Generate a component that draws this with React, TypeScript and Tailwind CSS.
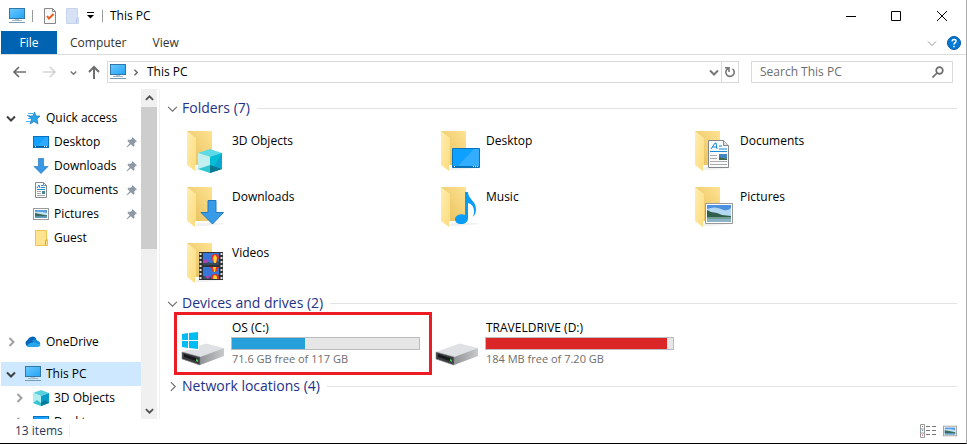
import type { ReactNode } from 'react';

type IconProps = { className?: string };

function Chevron({ direction, className = '' }: { direction: 'down' | 'right' | 'up'; className?: string }) {
  const d = { down: 'M1 3.5 5 7.5 9 3.5', right: 'M3.5 1 7.5 5 3.5 9', up: 'M1 6.5 5 2.5 9 6.5' }[direction];
  return (
    <svg viewBox="0 0 10 10" className={`shrink-0 ${className}`} fill="none" stroke="currentColor" aria-hidden="true">
      <path d={d} />
    </svg>
  );
}

function PcIcon({ className = 'size-4' }: IconProps) {
  return (
    <svg viewBox="0 0 16 16" className={`shrink-0 ${className}`} aria-hidden="true">
      <defs>
        <linearGradient id="screen" x1="0" y1="0" x2="1" y2="1">
          <stop offset="0" stopColor="#6cc9ff" />
          <stop offset="1" stopColor="#22a3f5" />
        </linearGradient>
      </defs>
      <rect x=".5" y=".5" width="15" height="10" fill="url(#screen)" stroke="#3278a6" />
      <path d="M6 11h4v1H6z" fill="#b5c4ce" />
      <path d="M3 12.5h10" stroke="#9fb8c8" />
      <path d="M0 14.5h16" stroke="#789caf" />
    </svg>
  );
}

function DesktopIcon() {
  return (
    <svg viewBox="0 0 16 16" className="size-4 shrink-0" aria-hidden="true">
      <rect x=".5" y="2.5" width="15" height="11" fill="#13a0ff" stroke="#0873bd" />
      <path d="M4 12 13 3h2v9z" fill="#2caaff" />
      <path d="M1 12.5h14" stroke="#075f9f" />
      <path d="M2 12.5h1m8 0h1m1 0h1" stroke="#fff" />
    </svg>
  );
}

function ArrowIcon() {
  return (
    <svg viewBox="0 0 16 16" className="size-4 shrink-0" aria-hidden="true">
      <path d="M5.5.5h5v8h4.500L8 15.500 1 8.500h4.500z" fill="#3a97e4" stroke="#2778bd" strokeWidth=".7" />
    </svg>
  );
}

function DocumentIcon() {
  return (
    <svg viewBox="0 0 16 16" className="size-4 shrink-0" aria-hidden="true">
      <path d="M2.5.5h8l3 3v12h-11z" fill="#fafafa" stroke="#858a8e" />
      <path d="M10.5.5v3h3" fill="none" stroke="#858a8e" />
      <path d="m4 6 2-3 1 3M8 3.500h2M8 5.500h4M4 7.500h8" fill="none" stroke="#248bd0" />
      <path d="M4 9.500h4m-4 2h4m-4 2h8" stroke="#a6aaad" />
      <path d="M9 9h3v3H9z" fill="#4c8298" />
    </svg>
  );
}

function PictureIcon({ className = 'size-4' }: IconProps) {
  return (
    <svg viewBox="0 0 16 16" className={`shrink-0 ${className}`} aria-hidden="true">
      <rect x=".5" y="2.5" width="15" height="11" fill="#fff" stroke="#9a9a9a" />
      <path d="M2 4h12v8H2z" fill="#5a9de2" />
      <path d="M2 6q4-1 12 1v2H2z" fill="#c2e1ef" />
      <path d="m2 7 5 1 7 1.500v1H2z" fill="#3b6c60" />
      <path d="M2 10.500h12V12H2z" fill="#659cb9" />
    </svg>
  );
}

function GuestFolderIcon() {
  return (
    <svg viewBox="0 0 16 16" className="size-4 shrink-0" aria-hidden="true">
      <path d="M2.5.5h11v9h1v6h-12z" fill="#ffe391" stroke="#edc451" />
      <path d="M12.5 15.500v-5h1v-1" fill="none" stroke="#dda919" />
    </svg>
  );
}

function QuickAccessIcon() {
  return (
    <svg viewBox="0 0 16 16" className="size-4 shrink-0" aria-hidden="true">
      <path d="m9.500 2 1.500 4h4l-3 3 1 5-4-2.500L5 14l1.500-5-3-3H8z" fill="#2ba3e8" stroke="#1479bd" strokeWidth=".7" />
      <path d="M3 3.500h5M2 5.500h3M3 8.500h3M1 11.500h4" stroke="#47b5f1" />
    </svg>
  );
}

function OneDriveIcon() {
  return (
    <svg viewBox="0 0 16 16" className="size-4 shrink-0" aria-hidden="true">
      <path d="M3 12.500A3.500 3.500 0 0 1 2.500 6 5 5 0 0 1 11.500 5L8 9z" fill="#0865b7" />
      <path d="M7 6.500A5 5 0 0 1 13 7a3 3 0 0 1 2 4L9 9z" fill="#1490df" />
      <path d="M2 12q2-4 7-3.500L15.500 11q-1 2-3 2h-9Q2 13 2 12z" fill="#28a8ea" />
    </svg>
  );
}

function CubeIcon() {
  return (
    <svg viewBox="0 0 16 16" className="size-4 shrink-0" aria-hidden="true">
      <path d="m0 3 8-3 8 3-8 3z" fill="#55d0dc" />
      <path d="m0 3 8 3v10l-8-3z" fill="#b2edf0" />
      <path d="m16 3-8 3v10l8-3z" fill="#079cc6" />
      <path d="m0 13 4-3 4 3v3z" fill="#35c4d1" />
      <path d="m16 13-4-3-4 3v3z" fill="#087999" />
    </svg>
  );
}

function PinIcon() {
  return (
    <svg viewBox="0 0 12 12" className="size-[11px] shrink-0" fill="#8d9aa5" aria-hidden="true">
      <path d="m7 0 5 5-1.500.5L9 7l.2 2.500-1.200 1L5.300 8 1 11.500l-.5-.5L4 6.700 1.500 4l1-1L5 3l1.500-1.500z" />
    </svg>
  );
}

function DriveIcon({ windows = false }: { windows?: boolean }) {
  return (
    <svg viewBox="0 0 48 48" className="mt-[7px] size-12 shrink-0" aria-hidden="true">
      <defs>
        <linearGradient id="driveSide" x1="0" y1="0" x2="1" y2="0">
          <stop offset="0" stopColor="#909295" />
          <stop offset="1" stopColor="#c8c9cb" />
        </linearGradient>
      </defs>
      <path d="m5 35 15 9 27-11-3-2-23 8z" fill="#efefef" />
      <path d="m4 30 22-8q2-1 4 0l16 4-24 9z" fill="#e0e1e4" />
      <path d="m22 35 24-9v8L22 43z" fill="url(#driveSide)" />
      <path d="m4 30 18 5v8L4 37z" fill="#3a3c3f" stroke="#85878a" strokeWidth=".6" />
      <path d="m6 32 12 4v3L6 35z" fill="#17191b" />
      <path d="m18 37 2 1v2l-2-1z" fill="#39dc45" />
      {windows && (
        <>
          <path d="M3 10h18v18H3z" fill="#fff" />
          <path d="m4 12 6-1v7H4zm7-1 9-1v8h-9zM4 19h6v7l-6-1zm7 0h9v8l-9-1z" fill="#00bcf2" />
        </>
      )}
    </svg>
  );
}

function FolderIcon({ children }: { children: ReactNode }) {
  return (
    <svg viewBox="0 0 48 48" className="size-12 shrink-0" aria-hidden="true">
      <defs>
        <linearGradient id="folderBack" x1="0" y1="1" x2="1" y2="0">
          <stop offset="0" stopColor="#e4bd58" />
          <stop offset="1" stopColor="#ffe392" />
        </linearGradient>
        <linearGradient id="folderFront" x1="0" y1="0" x2="1" y2="1">
          <stop offset="0" stopColor="#ffedb0" />
          <stop offset="1" stopColor="#fcdb7b" />
        </linearGradient>
      </defs>
      <path d="m16 43 4-3h24l3 1-22 2z" fill="#f1f1f1" />
      <path d="M9 4h25v34H9z" fill="url(#folderBack)" />
      <path d="m9 4 9 7v27l-1 .5V44l-8-6z" fill="url(#folderFront)" />
      {children}
    </svg>
  );
}

const folderArt: Record<string, ReactNode> = {
  '3D Objects': (
    <>
      <path d="m20 26 12-4 12 4-12 4z" fill="#5cdae6" />
      <path d="m20 26 12 4v16l-12-4z" fill="#c2f0f0" />
      <path d="m44 26-12 4v16l12-4z" fill="#09a6d4" />
      <path d="M32 30v16l6-10 6-10z" fill="#07bdd5" />
      <path d="m20 42 12-4v8z" fill="#30c8d0" />
      <path d="m44 42-12-4v8z" fill="#087890" />
    </>
  ),
  Desktop: (
    <>
      <path d="M20.500 21.500h27v19h-27z" fill="#0ea0ff" stroke="#0874bb" />
      <path d="m26 39 16-17h5v17z" fill="#33adff" />
      <path d="M21 39.500h26" stroke="#0871b5" />
      <path d="M22 39.500h1m18 0h1m1 0h1m1 0h1" stroke="#fff" />
    </>
  ),
  Documents: (
    <>
      <path d="M22.500 13.500h15l5 5v22h-20z" fill="#f9fafb" stroke="#83878b" />
      <path d="M37.500 13.500v5h5" fill="#dfe1e2" stroke="#83878b" />
      <path d="m25 22 4-6h1l1 6m-5-2h5m2-1h3m-3 3h8m-17 2.500h17" fill="none" stroke="#198ad4" />
      <path d="M24 28.500h7m-7 3h7m-7 3h17m-17 3h17" stroke="#aaa" />
      <path d="M33 27h8v6h-8z" fill="#4189c0" />
      <path d="m33 30 8 2v1h-8z" fill="#416d48" />
    </>
  ),
  Downloads: <path d="M30 17.500h8v12h7.500L34.500 41 23 29.500h7z" fill="#389be8" stroke="#2279be" />,
  Music: (
    <path
      d="M33 9h3c0 7 8 9 8 17 0 3-1 6-3 8 3-9-1-13-5-14v15c0 4-3 6-7 6s-6-2-6-5 5-6 10-4z"
      fill="#0b9df5"
    />
  ),
  Pictures: (
    <>
      <path d="M19.500 20.500h27v20h-27z" fill="#fff" stroke="#999" />
      <path d="M21 22h24v17H21z" fill="#4c90e0" />
      <path d="M21 26q8-3 14 0t10-1v8H21z" fill="#b5d8f2" />
      <path d="m21 27 4 2 6 1 5 2 9 1v2H21z" fill="#315e48" />
      <path d="M21 34h24v2H21z" fill="#6f9f93" />
      <path d="M21 36h24v3H21z" fill="#8db4c6" />
    </>
  ),
  Videos: (
    <>
      <path d="M21 13h24v28H21z" fill="#303235" />
      <path d="M25 14h16v12H25zm0 14h16v12H25z" fill="#3576d8" />
      <path d="M22.500 14v27m21-27v27" stroke="#ddd" strokeWidth="2" strokeDasharray="2 2" />
      <path d="m25 24 5-1 3 1 8-2v4H25zm0 13 6 1 10-2v4H25z" fill="#354d5b" />
      <path d="M33 19a4 4 0 0 1 8 0l-3 5h-2zm-1 9h9l-3 5h-3zm1 11a4 4 0 0 1 8 0v1h-8z" fill="#e62f2a" />
      <path d="M35 19q2-6 4 0l-1 5h-2zm0 9h3l-1 5h-1zm0 10q2-4 4 0v2h-4z" fill="#ffd22d" />
      <path d="m25 22 3-2 3 2-2 2h-3zm2 16 3-2 2 2-2 2z" fill="#a843b5" />
    </>
  ),
};

function NavItem({ icon, label, expand, pinned, nested, selected }: {
  icon: ReactNode; label: string; expand?: 'down' | 'right'; pinned?: boolean; nested?: boolean; selected?: boolean;
}) {
  return (
    <li>
      <a
        href="#"
        aria-current={selected ? 'page' : undefined}
        className={`flex h-6 items-center gap-[5px] pr-1 ${nested ? 'pl-[13px]' : 'pl-[5px]'} ${selected ? 'bg-[#cde8ff]' : ''}`}
      >
        <span className={`flex w-[14px] shrink-0 ${expand === 'right' ? 'text-[#a0a0a0]' : 'text-[#404040]'}`}>
          {expand && <Chevron direction={expand} className="size-[10px] stroke-2" />}
        </span>
        {icon}
        <span className="flex-1 whitespace-nowrap">{label}</span>
        {pinned && <PinIcon />}
      </a>
    </li>
  );
}

function Group({ title, open = true, children }: { title: string; open?: boolean; children?: ReactNode }) {
  return (
    <section>
      <h2 className="flex h-6 items-center gap-[7px] pr-[9px] pl-[7px]">
        <button type="button" aria-expanded={open} className="flex items-center gap-1 text-[14px] leading-5 whitespace-nowrap text-[#1e3287]">
          <Chevron direction={open ? 'down' : 'right'} className="size-[11px] text-[#6d6d6d]" />
          {title}
        </button>
        <span className="h-px flex-1 bg-[#e2e2e2]" />
      </h2>
      {children}
    </section>
  );
}

function Drive({ name, detail, used, fill, windows, highlighted }: {
  name: string; detail: string; used: number; fill: string; windows?: boolean; highlighted?: boolean;
}) {
  return (
    <li className="relative flex h-[59px] w-[254px] gap-[5px]">
      {highlighted && <span className="pointer-events-none absolute -top-[3px] -left-1 h-[63px] w-[258px] border-3 border-[#ed1c24]" />}
      <DriveIcon windows={windows} />
      <div className="w-[189px] pt-[5px]">
        <p className="px-px leading-4">{name}</p>
        <div role="progressbar" aria-label={`${name} space used`} aria-valuenow={used} aria-valuemin={0} aria-valuemax={100} className="mt-px h-[13px] border border-[#bcbcbc] bg-[#e6e6e6]">
          <div className={`h-full ${fill}`} style={{ width: `${used}%` }} />
        </div>
        <p className="px-px text-[11px] leading-[18px] text-[#6d6d6d]">{detail}</p>
      </div>
    </li>
  );
}

export default function App() {
  return (
    <div className="flex h-screen flex-col overflow-hidden border-r border-b border-r-[#aaa] border-b-black bg-white pl-px font-['Open_Sans','Noto_Sans',sans-serif] text-[12px] leading-4 text-black">
      <header className="flex h-[31px] shrink-0 items-center pl-2">
        <PcIcon />
        <span className="ml-[7px] h-3 w-px bg-[#999]" />
        <button type="button" aria-label="Properties" className="ml-[11px]">
          <svg viewBox="0 0 12 16" className="h-4 w-3">
            <path d="M.5.5h8l3 3v12H.5z" fill="#f8f8f8" stroke="#888" />
            <path d="M8.500.5v3h3" fill="none" stroke="#888" />
            <path d="m3 8 2 2.500L9.500 6" fill="none" stroke="#ec5b21" strokeWidth="2" />
          </svg>
        </button>
        <button type="button" aria-label="New folder" className="ml-[10px]">
          <svg viewBox="0 0 13 16" className="h-4 w-[13px]">
            <path d="M.5.5h11v9h1v6H.5z" fill="#d6e2f4" stroke="#c7d6ec" />
            <path d="M10.500 15.500v-5h1" fill="none" stroke="#b5c8e5" />
          </svg>
        </button>
        <button type="button" aria-label="Customize Quick Access Toolbar" className="ml-2">
          <svg viewBox="0 0 7 7" className="size-[7px]"><path d="M0 .5h7" stroke="#000" /><path d="M0 3h7L3.500 6.500z" /></svg>
        </button>
        <span className="ml-2 h-3 w-px bg-[#999]" />
        <h1 className="ml-[7px] flex-1">This PC</h1>
        <button type="button" aria-label="Minimize" className="flex h-full w-[45px] items-center justify-center">
          <svg viewBox="0 0 10 10" className="size-[10px]"><path d="M0 5.500h10" stroke="#000" /></svg>
        </button>
        <button type="button" aria-label="Maximize" className="flex h-full w-[45px] items-center justify-center">
          <svg viewBox="0 0 10 10" className="size-[10px]"><path d="M.5.5h9v9h-9z" fill="none" stroke="#000" /></svg>
        </button>
        <button type="button" aria-label="Close" className="flex h-full w-[48px] items-center justify-center">
          <svg viewBox="0 0 10 10" className="size-[10px]"><path d="m0 0 10 10M10 0 0 10" stroke="#000" /></svg>
        </button>
      </header>

      <nav aria-label="Ribbon" className="flex h-6 shrink-0 items-stretch border-b border-[#dcdcdc] text-[#333]">
        <button type="button" className="w-14 bg-[#0063b1] text-white">File</button>
        <button type="button" className="px-[13px]">Computer</button>
        <button type="button" className="px-[13px]">View</button>
        <span className="flex-1" />
        <button type="button" aria-label="Expand the ribbon" className="mr-[10px] text-[#999]"><Chevron direction="down" className="size-[10px]" /></button>
        <button type="button" aria-label="Help" className="mr-[5px] flex items-center">
          <svg viewBox="0 0 14 14" className="size-[14px]" fill="none">
            <circle cx="7" cy="7" r="6.500" fill="#0078d7" stroke="#0759a5" />
            <path d="M5 5.300Q5.200 3.500 7.200 3.500T9 5.300Q9 6.300 7.800 7 7 7.500 7 8.500M7 9.700v1.500" stroke="#fff" strokeWidth="1.500" />
          </svg>
        </button>
      </nav>

      <div className="flex h-[34px] shrink-0 items-center pr-[13px] pl-3">
        <button type="button" aria-label="Back" className="text-[#6e6e6e]">
          <svg viewBox="0 0 14 12" className="h-3 w-[14px]" fill="none" stroke="currentColor" strokeWidth="1.700"><path d="M1 6h12M6 1 1 6l5 5" /></svg>
        </button>
        <button type="button" aria-label="Forward" className="ml-4 text-[#d5d5d5]">
          <svg viewBox="0 0 14 12" className="h-3 w-[14px]" fill="none" stroke="currentColor" strokeWidth="1.700"><path d="M0 6h12M7 1l5 5-5 5" /></svg>
        </button>
        <button type="button" aria-label="Recent locations" className="ml-[13px] text-[#777]"><Chevron direction="down" className="size-[7px] stroke-2" /></button>
        <button type="button" aria-label="Up" className="ml-[11px] text-[#6e6e6e]">
          <svg viewBox="0 0 12 14" className="h-[14px] w-3" fill="none" stroke="currentColor" strokeWidth="2"><path d="M6 14V2M1 7l5-5 5 5" /></svg>
        </button>
        <div className="ml-[7px] flex h-[22px] flex-1 items-center border border-[#d9d9d9] pl-[2px]">
          <PcIcon />
          <Chevron direction="right" className="ml-[6px] size-[7px] stroke-2 text-[#666]" />
          <button type="button" className="ml-1 px-1">This PC</button>
          <span className="flex-1" />
          <button type="button" aria-label="Previous locations" className="mr-[2px] text-[#777]"><Chevron direction="down" className="size-[10px] stroke-2" /></button>
          <button type="button" aria-label="Refresh" className="flex h-full w-[17px] items-center justify-center border-l border-[#d9d9d9] text-[#777]">
            <svg viewBox="0 0 12 12" className="size-3" fill="none" stroke="currentColor" strokeWidth="1.600"><path d="M8.500 2.800A4.200 4.200 0 1 1 4 2.500M1 1.800h4V6" /></svg>
          </button>
        </div>
        <label className="ml-3 flex h-[22px] w-[202px] items-center border border-[#d9d9d9] px-2 text-[#6d6d6d]">
          <input type="search" aria-label="Search This PC" placeholder="Search This PC" className="min-w-0 flex-1 bg-transparent outline-none placeholder:text-[#6d6d6d]" />
          <svg viewBox="0 0 12 12" className="size-3" fill="none" stroke="currentColor" strokeWidth="1.700" aria-hidden="true"><circle cx="7.500" cy="4.500" r="3.300" /><path d="M5 7 .5 11.500" /></svg>
        </label>
      </div>

      <div className="flex min-h-0 flex-1">
        <aside className="flex w-[159px] shrink-0 border-r border-[#f0f0f0]">
          <nav aria-label="Locations" className="min-w-0 flex-1 overflow-hidden pt-[17px]">
            <ul>
              <NavItem expand="down" icon={<QuickAccessIcon />} label="Quick access" />
              <NavItem nested pinned icon={<DesktopIcon />} label="Desktop" />
              <NavItem nested pinned icon={<ArrowIcon />} label="Downloads" />
              <NavItem nested pinned icon={<DocumentIcon />} label="Documents" />
              <NavItem nested pinned icon={<PictureIcon />} label="Pictures" />
              <NavItem nested icon={<GuestFolderIcon />} label="Guest" />
            </ul>
            <ul className="mt-20">
              <NavItem expand="right" icon={<OneDriveIcon />} label="OneDrive" />
            </ul>
            <ul className="mt-2">
              <NavItem selected expand="down" icon={<PcIcon />} label="This PC" />
              <NavItem nested expand="right" icon={<CubeIcon />} label="3D Objects" />
              <NavItem nested expand="right" icon={<DesktopIcon />} label="Desktop" />
            </ul>
          </nav>
          <div className="mr-[2px] flex w-4 flex-col items-center bg-[#f0f0f0] text-[#505050]">
            <button type="button" aria-label="Scroll up" className="flex h-[18px] items-center"><Chevron direction="up" className="size-[9px] stroke-2" /></button>
            <span className="h-[142px] w-full bg-[#cdcdcd]" />
            <span className="flex-1" />
            <button type="button" aria-label="Scroll down" className="flex h-[18px] items-center"><Chevron direction="down" className="size-[9px] stroke-2" /></button>
          </div>
        </aside>

        <main className="min-w-0 flex-1 overflow-hidden pt-[7px]">
          <Group title="Folders (7)">
            <ul className="flex flex-wrap gap-y-2 pt-[7px] pb-1 pl-[18px]">
              {['3D Objects', 'Desktop', 'Documents', 'Downloads', 'Music', 'Pictures', 'Videos'].map((name) => (
                <li key={name} className="w-[254px]">
                  <a href="#" className="flex gap-[6px]">
                    <FolderIcon>{folderArt[name]}</FolderIcon>
                    <span className="pt-[6px]">{name}</span>
                  </a>
                </li>
              ))}
            </ul>
          </Group>
          <Group title="Devices and drives (2)">
            <ul className="flex flex-wrap pl-[18px]">
              <Drive windows highlighted name="OS (C:)" detail="71.6 GB free of 117 GB" used={39} fill="bg-[#26a0da]" />
              <Drive name="TRAVELDRIVE (D:)" detail="184 MB free of 7.20 GB" used={97} fill="bg-[#da2626]" />
            </ul>
          </Group>
          <Group title="Network locations (4)" open={false} />
        </main>
      </div>

      <footer className="flex h-6 shrink-0 items-center pr-[9px] pl-[14px] text-[#1e395b]">
        <span>13 items</span>
        <span className="ml-[6px] h-3 w-px bg-[#eee]" />
        <span className="flex-1" />
        <button type="button" aria-label="Details view">
          <svg viewBox="0 0 16 14" className="h-[14px] w-4" fill="none">
            <path d="M.5.5h4v13h-4zm0 4.500h4m-4 4h4" stroke="#999" />
            <path d="M6 2.500h4m2 0h4M6 6.500h4m2 0h4m-10 4h4m2 0h4" stroke="#777" />
            <path d="M2 2.500h1" stroke="#777" /><path d="M2 6.500h1" stroke="#39d" /><path d="M2 11h1" stroke="#d33" />
          </svg>
        </button>
        <button type="button" aria-label="Large icons view" className="ml-[7px]"><PictureIcon className="size-[14px]" /></button>
      </footer>
    </div>
  );
}
